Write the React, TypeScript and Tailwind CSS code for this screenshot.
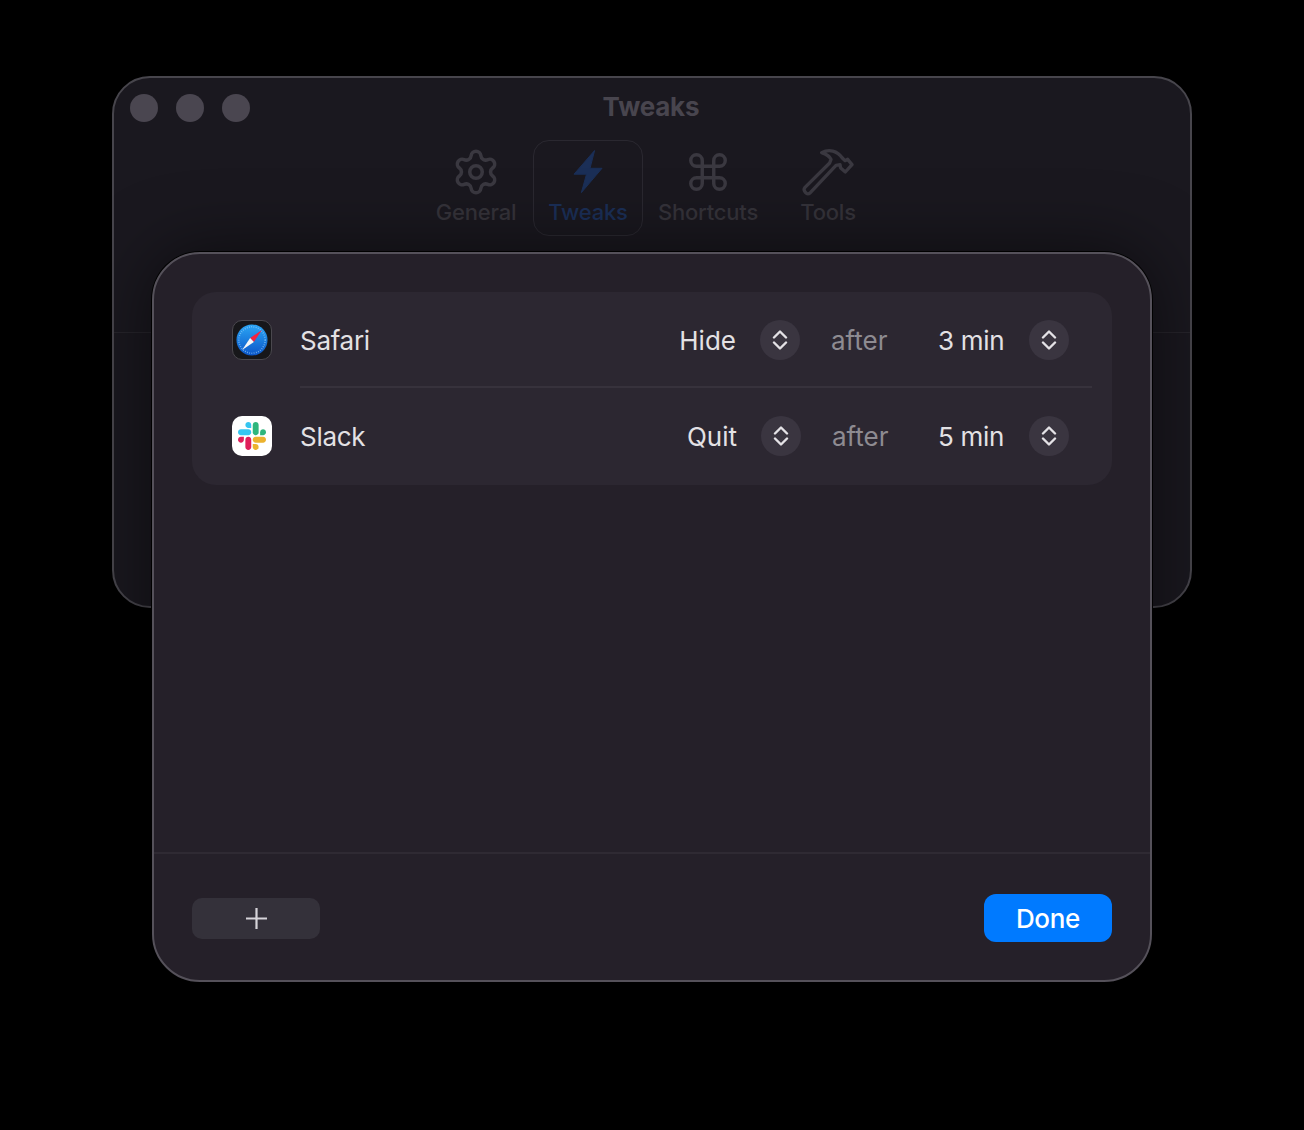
import { Settings, Command } from "lucide-react";

function Bolt() {
  return (
    <svg width="30" height="44" viewBox="573 151 30 44" className="block">
      <path d="M594.6 151.5 L574 175.2 L586.5 175.2 L581.4 193.6 L602 169.3 L590 169.3 Z" fill="#1b2f57" stroke="#1b2f57" strokeWidth="1" strokeLinejoin="round" />
    </svg>
  );
}

function Hammer() {
  return (
    <svg width="52" height="48" viewBox="844 58 156 144" className="block">
      <path
        d="M903 72 C925 60 950 66 965 88 L973 96 L981 92 L994 108 L974 130 L960 118 L958 108 L946 110 L869 192 Q861 199 855 192 L852 188 Q848 182 853 176 L927 103 L931 92 Q926 80 903 72 Z"
        fill="none"
        stroke="#3a3840"
        strokeWidth="10"
        strokeLinejoin="round"
      />
    </svg>
  );
}

function SafariIcon() {
  return (
    <div className="w-10 h-10 rounded-[10px] bg-[#17171a] border border-[#4a484e] flex items-center justify-center">
      <svg width="32" height="32" viewBox="0 0 34 34">
        <defs>
          <linearGradient id="safariBlue" x1="0" y1="0" x2="0" y2="1">
            <stop offset="0" stopColor="#2ba6f5" />
            <stop offset="1" stopColor="#0b55c8" />
          </linearGradient>
        </defs>
        <circle cx="17" cy="17" r="16.5" fill="url(#safariBlue)" />
        <circle cx="17" cy="17" r="14" fill="none" stroke="#9fd4fa" strokeWidth="1.6" strokeDasharray="0.8 1.6" opacity="0.75" />
        <path d="M27.5 6.5 L15 15 L19 19 Z" fill="#f5213f" />
        <path d="M6.5 27.5 L15 15 L19 19 Z" fill="#f4f5f7" />
      </svg>
    </div>
  );
}

function SlackIcon() {
  return (
    <div className="w-10 h-10 rounded-[10px] bg-white flex items-center justify-center">
      <svg width="28" height="28" viewBox="0 0 122.8 122.8">
        <path d="M25.8 77.6c0 7.1-5.8 12.9-12.9 12.9S0 84.7 0 77.6s5.8-12.9 12.9-12.9h12.9v12.9z" fill="#E01E5A" />
        <path d="M32.3 77.6c0-7.1 5.8-12.9 12.9-12.9s12.9 5.8 12.9 12.9v32.3c0 7.1-5.8 12.9-12.9 12.9s-12.9-5.8-12.9-12.9V77.6z" fill="#E01E5A" />
        <path d="M45.2 25.8c-7.1 0-12.9-5.8-12.9-12.9S38.1 0 45.2 0s12.9 5.8 12.9 12.9v12.9H45.2z" fill="#36C5F0" />
        <path d="M45.2 32.3c7.1 0 12.9 5.8 12.9 12.9s-5.8 12.9-12.9 12.9H12.9C5.8 58.1 0 52.3 0 45.2s5.8-12.9 12.9-12.9h32.3z" fill="#36C5F0" />
        <path d="M97 45.2c0-7.1 5.8-12.9 12.9-12.9s12.9 5.8 12.9 12.9-5.8 12.9-12.9 12.9H97V45.2z" fill="#2EB67D" />
        <path d="M90.5 45.2c0 7.1-5.8 12.9-12.9 12.9s-12.9-5.8-12.9-12.9V12.9C64.7 5.8 70.5 0 77.6 0s12.9 5.8 12.9 12.9v32.3z" fill="#2EB67D" />
        <path d="M77.6 97c7.1 0 12.9 5.8 12.9 12.9s-5.8 12.9-12.9 12.9-12.9-5.8-12.9-12.9V97h12.9z" fill="#ECB22E" />
        <path d="M77.6 90.5c-7.1 0-12.9-5.8-12.9-12.9s5.8-12.9 12.9-12.9h32.3c7.1 0 12.9 5.8 12.9 12.9s-5.8 12.9-12.9 12.9H77.6z" fill="#ECB22E" />
      </svg>
    </div>
  );
}

function Stepper() {
  return (
    <div className="w-10 h-10 rounded-full bg-[#3a3540] flex items-center justify-center">
      <svg width="16" height="20" viewBox="0 0 16 20" fill="none" stroke="#e4e2e6" strokeWidth="2.4" strokeLinecap="round" strokeLinejoin="round" className="-ml-px">
        <path d="M2 7.5 L8 1.5 L14 7.5" />
        <path d="M2 12.5 L8 18.5 L14 12.5" />
      </svg>
    </div>
  );
}

function Row({
  icon,
  name,
  action,
  time,
  afterW,
}: {
  icon: React.ReactNode;
  name: string;
  action: string;
  time: string;
  afterW: string;
}) {
  return (
    <div className="flex items-center h-full pl-10 pr-[43px]">
      <div className="w-[68px] shrink-0">{icon}</div>
      <span className="text-[26px] leading-8 pt-0.5 tracking-[-0.3px] text-[#e3e1e4]">{name}</span>
      <div className="ml-auto flex items-center">
        <span className="text-[26px] leading-8 pt-0.5 text-[#e3e1e4]">{action}</span>
        <div className="ml-[24px] mr-[31px]">
          <Stepper />
        </div>
        <span className={`text-[26px] leading-8 pt-0.5 text-[#8e8b91] ${afterW}`}>after</span>
        <span className="text-[26px] leading-8 pt-0.5 tracking-[-0.3px] text-[#e3e1e4] w-[66px] whitespace-nowrap">{time}</span>
        <div className="ml-[25px]">
          <Stepper />
        </div>
      </div>
    </div>
  );
}

function Tab({ icon, label, active, w }: { icon: React.ReactNode; label: string; active?: boolean; w: string }) {
  return (
    <div
      className={`${w} h-24 flex flex-col items-center rounded-2xl border ${active ? "border-[#2a2830]" : "border-transparent"}`}
    >
      <div className="h-[57px] flex items-center justify-center pt-[5px]">{icon}</div>
      <span className={`text-[22px] leading-7 font-medium tracking-[-0.2px] ${active ? "text-[#1b2f57]" : "text-[#35333a]"}`}>{label}</span>
    </div>
  );
}

export default function App() {
  return (
    <div className="min-h-[1130px] bg-black flex justify-center pt-[76px] font-['Inter',sans-serif]">
      <div className="relative w-[1080px] h-[532px] rounded-[38px] border-2 border-[#47454c] bg-[#1a181f] flex flex-col">
        <div className="h-[255px] border-b border-[#26242b] shrink-0 flex flex-col">
          <div className="relative h-[62px] pl-[16px] pt-4 flex gap-[18px]">
            <div className="w-7 h-7 rounded-full bg-[#4a4650]" />
            <div className="w-7 h-7 rounded-full bg-[#4a4650]" />
            <div className="w-7 h-7 rounded-full bg-[#4a4650]" />
            <span className="absolute left-0 right-0 top-[13px] pr-0.5 text-center text-[26px] leading-8 font-bold tracking-[-0.2px] text-[#48454e]">Tweaks</span>
          </div>
          <div className="flex justify-center pr-0.5">
            <Tab w="w-[114px]" label="General" icon={<Settings size={50} strokeWidth={1.7} color="#3a3840" />} />
            <Tab w="w-[110px]" label="Tweaks" active icon={<Bolt />} />
            <Tab w="w-[130px]" label="Shortcuts" icon={<Command size={46} strokeWidth={1.8} color="#3a3840" />} />
            <Tab w="w-[110px]" label="Tools" icon={<Hammer />} />
          </div>
        </div>
        <div className="absolute left-[38px] top-[174px] w-[1000px] h-[730px] rounded-[48px] border-2 border-[#55515a] bg-[#252029] flex flex-col shadow-[0_0_0_1px_#000,0_0_70px_rgba(0,0,0,0.55)]">
          <div className="flex-1 pt-[38px] px-[38px]">
            <div className="w-[920px] h-[193px] rounded-3xl bg-[#2c2731] flex flex-col">
              <div className="h-[94px] pt-0.5">
                <Row icon={<SafariIcon />} name="Safari" action="Hide" time="3 min" afterW="w-[107px]" />
              </div>
              <div className="h-0.5 ml-[108px] mr-5 bg-[#37323c] shrink-0" />
              <div className="flex-1 pb-px">
                <Row icon={<SlackIcon />} name="Slack" action="Quit" time="5 min" afterW="w-[106px]" />
              </div>
            </div>
          </div>
          <div className="h-[128px] border-t-2 border-[#2f2a33] shrink-0 flex items-center justify-between px-[38px]">
            <button className="w-32 h-[41px] rounded-[10px] bg-[#34313a] flex items-center justify-center mt-0.5">
              <svg width="21" height="21" viewBox="0 0 21 21" stroke="#d6d4d9" strokeWidth="2.2" className="ml-px">
                <path d="M10.5 0 V21 M0 10.5 H21" />
              </svg>
            </button>
            <button className="w-32 h-12 rounded-xl bg-[#007aff] text-white text-[26px] font-medium tracking-[-0.3px] mt-0.5">Done</button>
          </div>
        </div>
      </div>
    </div>
  );
}
